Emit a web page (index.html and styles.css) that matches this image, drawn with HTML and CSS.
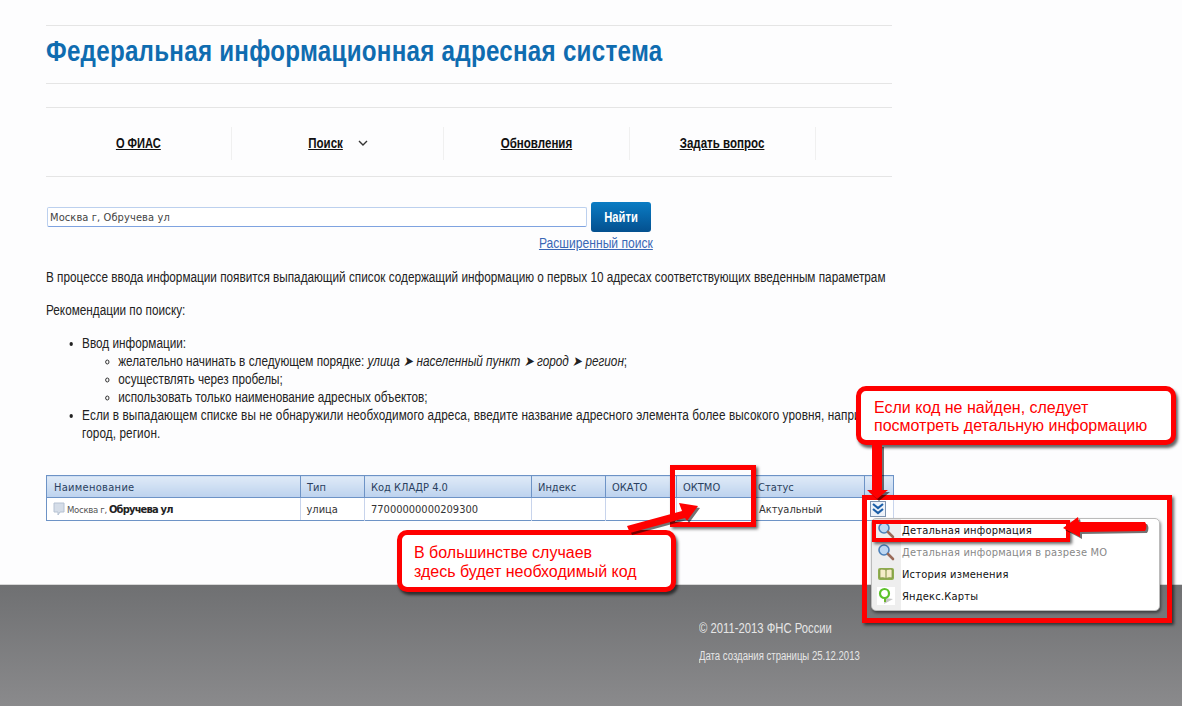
FILE: index.html
```html
<!DOCTYPE html>
<html lang="ru">
<head>
<meta charset="utf-8">
<title>ФИАС</title>
<link rel="stylesheet" href="styles.css">
</head>
<body>
<div class="page">
  <header class="head"><h1>Федеральная информационная адресная система</h1></header>
  <nav class="nav">
    <div class="nav-item w1"><a href="#">О ФИАС</a></div>
    <div class="nav-item w2"><a href="#">Поиск</a><svg class="caret" width="10" height="6" viewBox="0 0 10 6"><path d="M1 1l4 4 4-4" fill="none" stroke="#333" stroke-width="1.4"/></svg></div>
    <div class="nav-item w3"><a href="#">Обновления</a></div>
    <div class="nav-item w4"><a href="#">Задать вопрос</a></div>
  </nav>
  <div class="search">
    <div class="search-row">
      <div class="input">Москва г, Обручева ул</div>
      <button class="btn"><span>Найти</span></button>
    </div>
    <a class="adv" href="#">Расширенный поиск</a>
  </div>
  <p class="lead">В процессе ввода информации появится выпадающий список содержащий информацию о первых 10 адресах соответствующих введенным параметрам</p>
  <p class="lead second">Рекомендации по поиску:</p>
  <ul class="tips">
    <li>Ввод информации:
      <ul>
        <li>желательно начинать в следующем порядке: <i>улица ➤ населенный пункт ➤ город ➤ регион</i>;</li>
        <li>осуществлять через пробелы;</li>
        <li>использовать только наименование адресных объектов;</li>
      </ul>
    </li>
    <li class="wide">Если в выпадающем списке вы не обнаружили необходимого адреса, введите название адресного элемента более высокого уровня, например улицу,<br>город, регион.</li>
  </ul>
  <table class="grid">
    <colgroup><col class="c1"><col class="c2"><col class="c3"><col class="c4"><col class="c5"><col class="c6"><col class="c7"><col class="c8"></colgroup>
    <thead><tr><th>Наименование</th><th>Тип</th><th>Код КЛАДР 4.0</th><th>Индекс</th><th>ОКАТО</th><th>ОКТМО</th><th>Статус</th><th></th></tr></thead>
    <tbody><tr>
      <td class="name"><svg class="note" width="12" height="14" viewBox="0 0 12 14"><path d="M1 1h10v9H7l-2 3v-3H1z" fill="#d5dde8" stroke="#b6c2d2"/></svg><span class="city">Москва г,</span> <b>Обручева ул</b></td>
      <td>улица</td><td>77000000000209300</td><td></td><td></td><td></td><td>Актуальный</td>
      <td class="act"><span class="more"><svg width="12" height="12" viewBox="0 0 12 12"><path d="M1 1l5 4 5-4M1 6l5 4 5-4" fill="none" stroke="#1c5fa8" stroke-width="2.2"/></svg></span></td>
    </tr></tbody>
  </table>
</div>
<footer class="foot">
  <div class="copy">© 2011-2013 ФНС России</div>
  <div class="date">Дата создания страницы 25.12.2013</div>
</footer>

<div class="menu">
  <div class="mi"><svg width="18" height="18" viewBox="0 0 18 18"><circle cx="7" cy="7" r="5" fill="#bcd7f2" stroke="#4a7fb8" stroke-width="1.6"/><path d="M11 11l5 5" stroke="#9a6a58" stroke-width="2.6" stroke-linecap="round"/></svg><span>Детальная информация</span></div>
  <div class="mi off"><svg width="18" height="18" viewBox="0 0 18 18"><circle cx="7" cy="7" r="5" fill="#bcd7f2" stroke="#4a7fb8" stroke-width="1.6"/><path d="M11 11l5 5" stroke="#9a6a58" stroke-width="2.6" stroke-linecap="round"/></svg><span>Детальная информация в разрезе МО</span></div>
  <div class="mi"><svg width="18" height="18" viewBox="0 0 18 18"><rect x="1" y="3" width="16" height="12" rx="2" fill="#8fae4f"/><path d="M9 5C7 4 5 4 3 4.500V13c2-.5 4-.5 6 .5 2-1 4-1 6-.5V4.500C13 4 11 4 9 5z" fill="#f5edc8" stroke="#7b8f3c" stroke-width=".7"/><path d="M9 5v8.500" stroke="#7b8f3c"/></svg><span>История изменения</span></div>
  <div class="mi"><svg class="pin" width="18" height="18" viewBox="0 0 18 18"><path d="M8 11l-1 6 9-5z" fill="#c4c4c4"/><path d="M8 11.500V15" stroke="#6bb52c" stroke-width="2"/><circle cx="7.500" cy="6.500" r="4.500" fill="#fff" stroke="#5cc22a" stroke-width="2.200"/></svg><span>Яндекс.Карты</span></div>
</div>

<div class="frame f-oktmo"></div>
<div class="frame f-menu"></div>
<div class="frame thin f-item"></div>
<div class="callout c-a">В большинстве случаев<br>здесь будет необходимый код</div>
<div class="callout c-b">Если код не найден, следует<br>посмотреть детальную информацию</div>
<svg class="arrows" width="1182" height="706" viewBox="0 0 1182 706">
  <g class="ar-shadow" transform="translate(2 2)">
    <path d="M627 526L682 511 679 503 698 506 687 521 685 518 630 533z"/>
    <path d="M872 445h10v45h6l-11 9-10-9h5z"/>
    <path d="M1145 522q3 4 0 9L1080 532l0 5-17-9 15-11 1 5z"/>
  </g>
  <g class="ar">
    <path d="M627 526L682 511 679 503 698 506 687 521 685 518 630 533z"/>
    <path d="M872 445h10v45h6l-11 9-10-9h5z"/>
    <path d="M1145 522q3 4 0 9L1080 532l0 5-17-9 15-11 1 5z"/>
  </g>
</svg>
</body>
</html>
```
FILE: styles.css
```css
* { box-sizing: border-box; }
html, body { margin: 0; height: 706px; overflow: hidden; }
body {
  background: #fdfdfe;
  font-family: "Liberation Sans", sans-serif;
  color: #222;
  position: relative;
}
.page { width: 848px; height: 584px; margin-left: 46px; padding-top: 25px; }
.head { height: 59px; border-top: 1px solid #e5e5e5; border-bottom: 1px solid #e5e5e5; width: 846px; }
h1 { margin: 0; padding-top: 7px; font-size: 29px; line-height: 36px; font-weight: 700; color: #0f6cb0; letter-spacing: .3px; white-space: nowrap; transform: scaleX(.834); transform-origin: left; }
.nav { display: flex; margin-top: 23px; height: 70px; width: 846px; border-top: 1px solid #e5e5e5; border-bottom: 1px solid #e5e5e5; padding-top: 19px; }
.nav-item { height: 33px; padding-bottom: 2px; border-right: 1px solid #f0f0f0; display: flex; align-items: center; justify-content: center; gap: 10px; font-size: 15px; font-weight: 700; }
.nav-item a { color: #111; display: inline-block; transform: scaleX(.77); }
.w1 { width: 186px; } .w2 { width: 212px; padding-right: 4px; } .w3 { width: 186px; } .w4 { width: 186px; }
.w1 a { transform: scaleX(.74); }
.search { width: 607px; margin-top: 25px; display: flex; flex-direction: column; align-items: flex-end; }
.search-row { display: flex; align-items: center; gap: 4px; width: 100%; padding-left: 1px; }
.input { width: 540px; height: 20px; border: 1px solid #bcd0ee; border-bottom-color: #7fa3e0; border-radius: 2px; background: #fff; font: 11px/19px "DejaVu Sans", sans-serif; font-stretch: condensed; letter-spacing: .1px; color: #444; padding-left: 2px; }
.btn { width: 60px; height: 30px; border: 0; border-radius: 3px; background: linear-gradient(#0a7cc4, #04508f); color: #fff; font: 700 14px "Liberation Sans", sans-serif; padding: 0; }
.btn span { display: inline-block; transform: scaleX(.8); }
.adv { margin-top: 3px; font-size: 14px; line-height: 17px; color: #3a67b5; transform: scaleX(.864); transform-origin: right; white-space: nowrap; }
.lead { margin: 16px 0 0; font-size: 14px; line-height: 18px; white-space: nowrap; transform: scaleX(.84); transform-origin: left; }
.lead.second { margin-top: 15px; }
.tips { margin: 15px 0 0; padding-left: 43px; font-size: 14px; line-height: 18px; white-space: nowrap; transform: scaleX(.84); transform-origin: left; }
.tips ul { margin: 0; padding-left: 43px; }
.wide { letter-spacing: .1px; }
.grid { position: absolute; left: 46px; top: 475px; width: 847px; table-layout: fixed; border-collapse: collapse; font: 11px "DejaVu Sans", sans-serif; font-stretch: condensed; color: #333; border: 1px solid #6d93c6; background: #fff; }
.c1 { width: 254px; } .c2 { width: 64px; } .c3 { width: 167px; } .c4 { width: 74px; } .c5 { width: 71px; } .c6 { width: 76px; } .c7 { width: 112px; } .c8 { width: 29px; }
.grid th { height: 22px; padding: 1px 0 0 6px; font-weight: 400; text-align: left; background: linear-gradient(#dfeaf7, #bcd2ee); border: 1px solid #6d93c6; color: #2a3f60; }
.grid th:first-child { padding-left: 7px; letter-spacing: .3px; }
.grid th:nth-child(7) { padding-left: 5px; }
.grid td { height: 22px; padding: 0 0 0 6px; border-right: 1px solid #c8d4ec; white-space: nowrap; }
.name { display: flex; align-items: center; gap: 2px; height: 22px; }
.city { font-size: 9.500px; color: #555; letter-spacing: -.3px; }
.name b { color: #222; letter-spacing: -.8px; }
.note { flex: none; }
.act { position: relative; }
.more { position: absolute; left: 5px; top: 3px; width: 16px; height: 16px; border: 1px solid #7d93b0; background: #eef3fa; display: flex; align-items: center; justify-content: center; }
.foot { height: 122px; background: linear-gradient(#6f7072, #8a8a8c); border-top: 1px solid #d8d8d8; padding: 35px 0 0 699px; color: #e6e6e6; }
.copy { font-size: 14px; line-height: 16px; white-space: nowrap; transform: scaleX(.806); transform-origin: left; }
.date { font-size: 12px; line-height: 14px; margin-top: 13px; white-space: nowrap; transform: scaleX(.797); transform-origin: left; }
.menu { position: absolute; left: 871px; top: 518px; width: 289px; height: 93px; background: linear-gradient(90deg, #eeeeee 0 29px, #fff 29px); border: 1px solid #bbb; border-radius: 5px; box-shadow: 1px 2px 3px rgba(0,0,0,.45); font: 11px "DejaVu Sans", sans-serif; font-stretch: condensed; letter-spacing: .2px; color: #111; }
.mi { height: 22px; display: flex; align-items: center; gap: 7px; padding-left: 5px; }
.mi.off { color: #888; }
.pin { background: #fff; }
.frame { position: absolute; border: 5px solid #f00; box-shadow: 2px 2px 3px rgba(0,0,0,.6); }
.frame.thin { border-width: 4px; }
.f-oktmo { left: 670px; top: 465px; width: 86px; height: 62px; }
.f-menu { left: 862px; top: 495px; width: 310px; height: 128px; }
.f-item { left: 872px; top: 520px; width: 198px; height: 22px; }
.callout { position: absolute; background: #fff; border: 5px solid #f00; border-radius: 10px; box-shadow: 2px 3px 3px rgba(0,0,0,.6); color: #f00; font: 16px/18px "Liberation Sans", sans-serif; white-space: nowrap; }
.c-a { left: 397px; top: 530px; width: 279px; height: 62px; line-height: 19px; padding: 8px 0 0 12px; }
.c-b { left: 856px; top: 386px; width: 320px; height: 59px; padding: 8px 0 0 13px; }
.arrows { position: absolute; left: 0; top: 0; pointer-events: none; }
.ar { fill: #f00; }
.ar-shadow { fill: rgba(0,0,0,.55); }
```
